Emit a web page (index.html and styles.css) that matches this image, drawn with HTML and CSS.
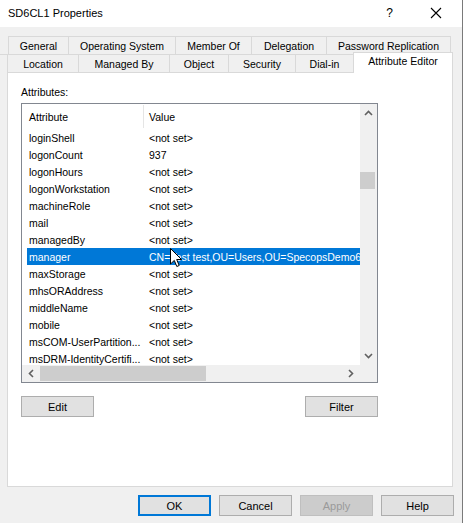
FILE: index.html
```html
<!DOCTYPE html>
<html>
<head>
<meta charset="utf-8">
<link rel="stylesheet" href="styles.css">
</head>
<body>
<div class="window">
  <div class="titlebar">
    <span class="title">SD6CL1 Properties</span>
    <span class="help-q">?</span>
    <svg class="close-x" width="12" height="12" viewBox="0 0 12 12"><path d="M1 1 L11 11 M11 1 L1 11" stroke="#000" stroke-width="1.1" fill="none"/></svg>
  </div>

  <div class="tabrow row1">
    <div class="tab w-general">General</div>
    <div class="tab w-os">Operating System</div>
    <div class="tab w-member">Member Of</div>
    <div class="tab w-deleg">Delegation</div>
    <div class="tab w-pass last">Password Replication</div>
  </div>
  <div class="tabrow row2">
    <div class="tab w-loc">Location</div>
    <div class="tab w-managed">Managed By</div>
    <div class="tab w-object">Object</div>
    <div class="tab w-security">Security</div>
    <div class="tab w-dial">Dial-in</div>
    <div class="tab w-attr selected">Attribute Editor</div>
  </div>

  <div class="panel">
    <div class="label">Attributes:</div>
    <div class="listbox">
      <div class="content">
        <div class="header">
          <div class="hcol hattr">Attribute</div>
          <div class="hsep"></div>
          <div class="hcol hval">Value</div>
        </div>
        <div class="rows">
          <div class="row"><span class="c1">loginShell</span><span class="c2">&lt;not set&gt;</span></div>
          <div class="row"><span class="c1">logonCount</span><span class="c2">937</span></div>
          <div class="row"><span class="c1">logonHours</span><span class="c2">&lt;not set&gt;</span></div>
          <div class="row"><span class="c1">logonWorkstation</span><span class="c2">&lt;not set&gt;</span></div>
          <div class="row"><span class="c1">machineRole</span><span class="c2">&lt;not set&gt;</span></div>
          <div class="row"><span class="c1">mail</span><span class="c2">&lt;not set&gt;</span></div>
          <div class="row"><span class="c1">managedBy</span><span class="c2">&lt;not set&gt;</span></div>
          <div class="row sel"><span class="c1">manager</span><span class="c2">CN=Test test,OU=Users,OU=SpecopsDemo6</span></div>
          <div class="row"><span class="c1">maxStorage</span><span class="c2">&lt;not set&gt;</span></div>
          <div class="row"><span class="c1">mhsORAddress</span><span class="c2">&lt;not set&gt;</span></div>
          <div class="row"><span class="c1">middleName</span><span class="c2">&lt;not set&gt;</span></div>
          <div class="row"><span class="c1">mobile</span><span class="c2">&lt;not set&gt;</span></div>
          <div class="row"><span class="c1">msCOM-UserPartition...</span><span class="c2">&lt;not set&gt;</span></div>
          <div class="row"><span class="c1">msDRM-IdentityCertifi...</span><span class="c2">&lt;not set&gt;</span></div>
        </div>
      </div>
      <div class="vscroll">
        <svg class="arr" width="9" height="6" viewBox="0 0 9 6"><path d="M1 5 L4.5 1.5 L8 5" stroke="#606060" stroke-width="1.6" fill="none"/></svg>
        <div class="vtrack"><div class="vthumb"></div></div>
        <svg class="arr" width="9" height="6" viewBox="0 0 9 6"><path d="M1 1 L4.5 4.5 L8 1" stroke="#606060" stroke-width="1.6" fill="none"/></svg>
      </div>
      <div class="hscroll">
        <svg class="harr" width="6" height="9" viewBox="0 0 6 9"><path d="M5 1 L1.5 4.5 L5 8" stroke="#606060" stroke-width="1.6" fill="none"/></svg>
        <div class="hthumb"></div>
        <svg class="harr right" width="6" height="9" viewBox="0 0 6 9"><path d="M1 1 L4.5 4.5 L1 8" stroke="#606060" stroke-width="1.6" fill="none"/></svg>
      </div>
      <div class="corner"></div>
    </div>
    <div class="panelbtns">
      <div class="btn">Edit</div>
      <div class="btn">Filter</div>
    </div>
  </div>

  <div class="dlgbtns">
    <div class="btn default">OK</div>
    <div class="btn">Cancel</div>
    <div class="btn disabled">Apply</div>
    <div class="btn">Help</div>
  </div>

  <svg class="cursor" width="13" height="20" viewBox="0 0 13 20"><path d="M0.5 0.5 L0.5 16 L4.3 12.4 L6.8 18.5 L9.2 17.5 L6.7 11.5 L11.5 11.5 Z" fill="#fff" stroke="#000" stroke-width="1"/></svg>
</div>
</body>
</html>
```

FILE: styles.css
```css
* { box-sizing: border-box; }
html, body { margin: 0; padding: 0; }
body {
  width: 463px;
  height: 523px;
  overflow: hidden;
  font-family: "Liberation Sans", Arial, sans-serif;
  font-size: 10.5px;
  color: #000;
  background: #f0f0f0;
}
.window {
  position: relative;
  width: 463px;
  height: 523px;
  background: #f0f0f0;
  border-right: 1px solid #7a7a7a;
  display: flex;
  flex-direction: column;
}
.titlebar {
  height: 27px;
  flex: none;
  background: #fff;
  display: flex;
  align-items: center;
  padding-left: 8px;
}
.title { font-size: 11px; flex: 1; padding-bottom: 2px; }
.help-q { font-size: 12px; margin-right: 37px; padding-bottom: 2px; }
.close-x { margin-right: 20px; margin-bottom: 2px; }

.tabrow { display: flex; flex: none; }
.row1 { margin-top: 9px; padding-left: 8px; height: 18px; }
.row2 { padding-left: 7px; border-top: 1px solid #d9d9d9; width: 453px; height: 18px; }
.row1 .tab { height: 18px; border-top: 1px solid #d9d9d9; }
.tab {
  height: 17px;
  border-left: 1px solid #d9d9d9;
  display: flex;
  align-items: center;
  justify-content: center;
  white-space: nowrap;
  background: #f0f0f0;
}
.tab.last { border-right: 1px solid #d9d9d9; }
.w-general { width: 60px; }
.w-os { width: 107px; }
.w-member { width: 76px; }
.w-deleg { width: 75px; }
.w-pass { width: 125px; }
.w-loc { width: 71px; }
.w-managed { width: 91px; }
.w-object { width: 59px; }
.w-security { width: 67px; }
.w-dial { width: 58px; }
.w-attr { width: 100px; }
.tab.selected {
  position: relative;
  z-index: 2;
  background: #fff;
  height: 21px;
  margin-top: -3px;
  border: 1px solid #d9d9d9;
  border-bottom: none;
  padding-bottom: 4px;
}

.panel {
  flex: none;
  margin-left: 7px;
  width: 446px;
  height: 415px;
  background: #fff;
  border: 1px solid #d9d9d9;
  padding: 13px 0 0 13px;
}
.label { height: 12px; line-height: 12px; margin-bottom: 5px; }
.listbox {
  width: 357px;
  height: 280px;
  border: 1px solid #828790;
  display: grid;
  grid-template-columns: 338px 17px;
  grid-template-rows: 261px 17px;
}
.content { overflow: hidden; background: #fff; }
.header { height: 25px; display: flex; align-items: center; }
.hattr { width: 121px; padding-left: 7px; }
.hsep { width: 1px; height: 23px; background: #e5e5e5; }
.hval { padding-left: 5px; }
.rows { padding-left: 5px; }
.row {
  height: 17px;
  display: flex;
  align-items: center;
  white-space: nowrap;
  overflow: hidden;
}
.c1 { width: 120px; padding-left: 2px; flex: none; }
.c2 { padding-left: 2px; }
.row.sel { background: #0078d7; color: #fff; }

.vscroll {
  background: #f0f0f0;
  display: flex;
  flex-direction: column;
  align-items: center;
}
.vscroll .arr { margin: 6px 0; }
.vtrack { flex: 1; width: 100%; }
.vthumb { width: 15px; height: 17px; margin-top: 50px; background: #cdcdcd; }
.hscroll {
  background: #f0f0f0;
  display: flex;
  align-items: center;
  padding-left: 6px;
}
.hthumb { width: 166px; height: 15px; background: #cdcdcd; margin-left: 6px; }
.harr.right { margin-left: auto; margin-right: 6px; }
.corner { background: #f0f0f0; }

.panelbtns {
  width: 357px;
  display: flex;
  justify-content: space-between;
  margin-top: 13px;
}
.btn {
  width: 73px;
  height: 21px;
  background: #e1e1e1;
  border: 1px solid #adadad;
  display: flex;
  align-items: center;
  justify-content: center;
  font-size: 11px;
}
.dlgbtns {
  display: flex;
  justify-content: flex-end;
  gap: 8px;
  margin-top: 8px;
  padding-right: 8px;
}
.btn.default { border: 2px solid #0078d7; }
.btn.disabled { background: #cccccc; border-color: #bfbfbf; color: #9a9a9a; }

.cursor { position: absolute; left: 170px; top: 248px; }
```
